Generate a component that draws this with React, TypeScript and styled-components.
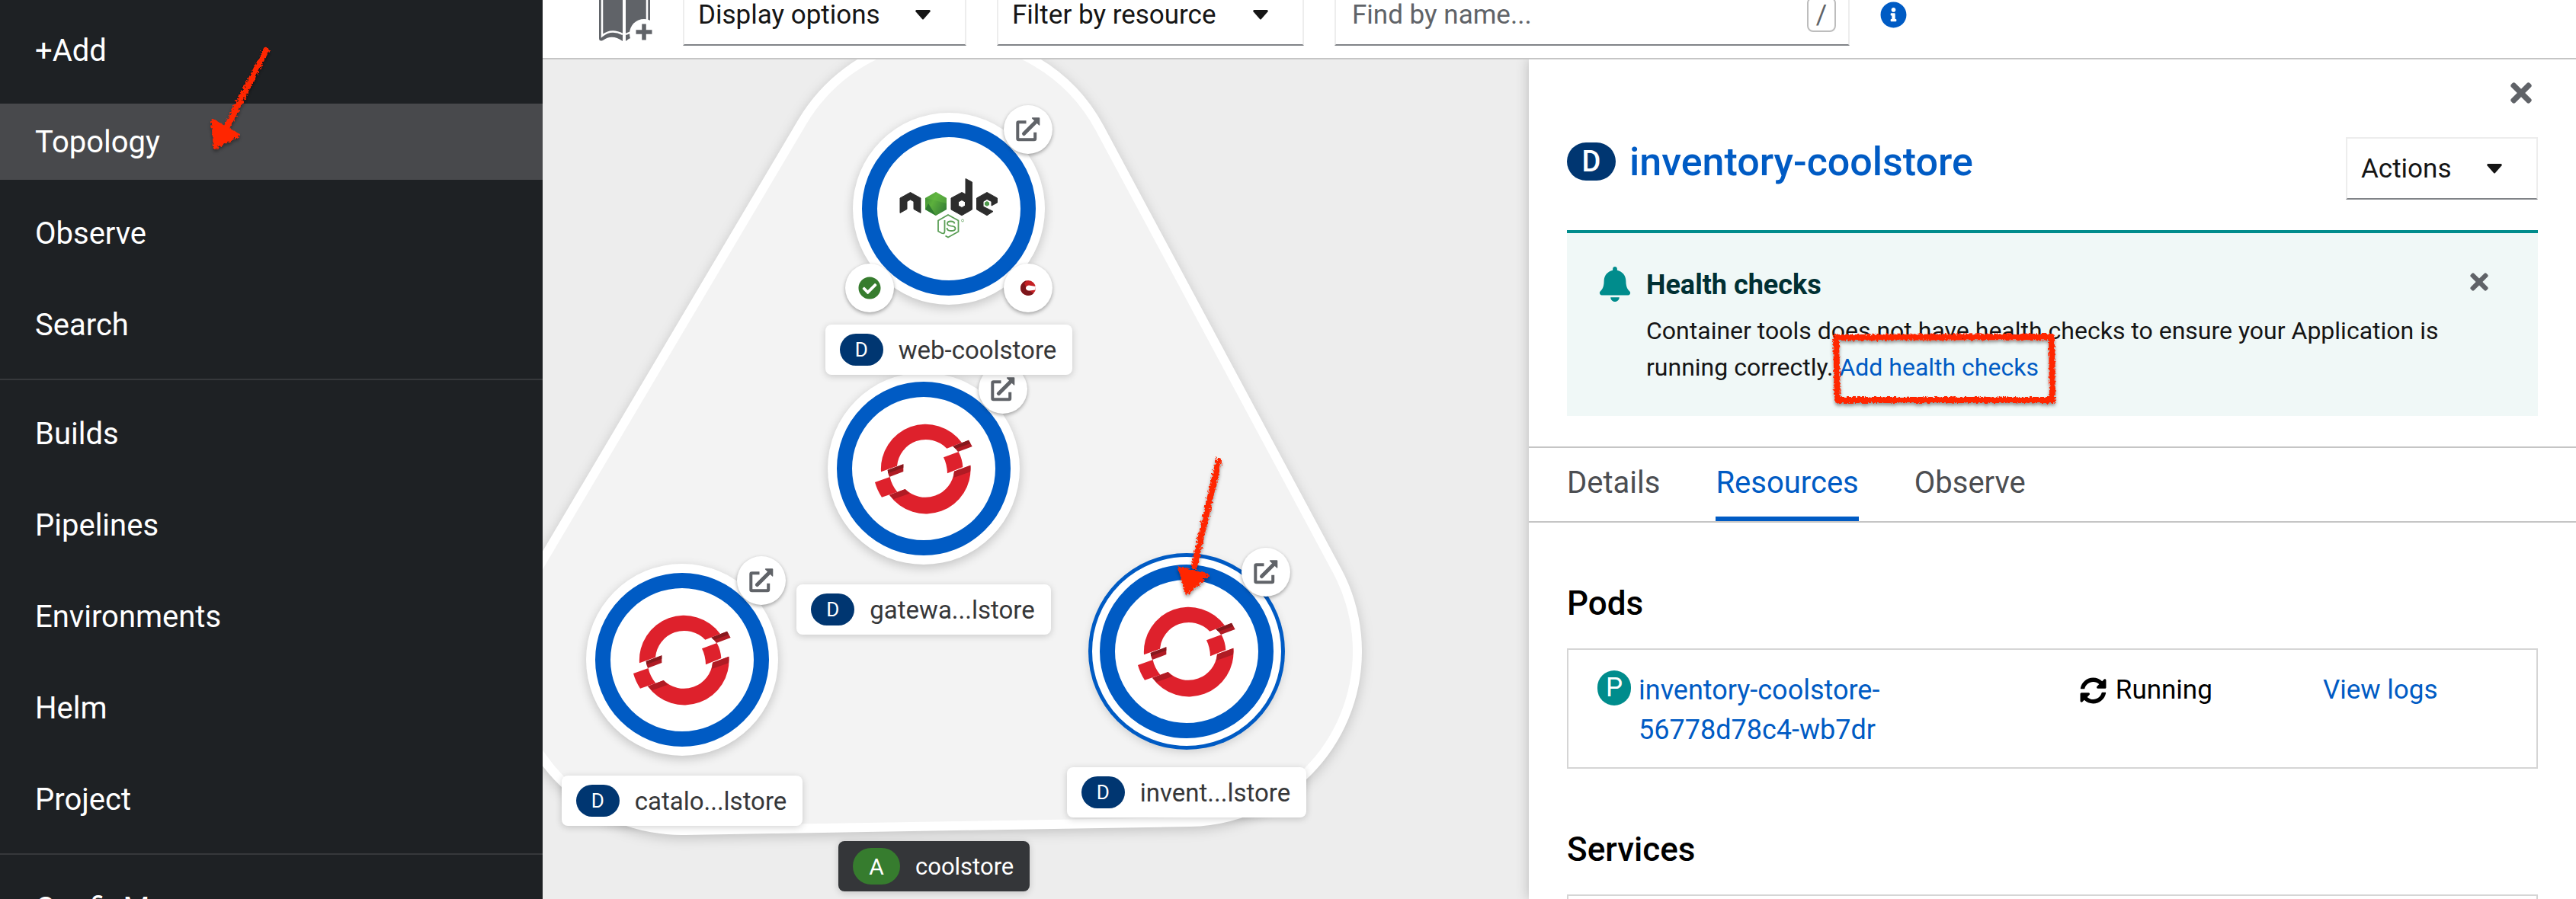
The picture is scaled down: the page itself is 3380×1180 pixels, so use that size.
import React from 'react';
import styled, { createGlobalStyle, css } from 'styled-components';
import { FaBell, FaCheckCircle, FaInfoCircle, FaSyncAlt, FaTimes } from 'react-icons/fa';

const color = {
  nav: '#1e2124',
  navActive: '#48494c',
  navRule: '#36383b',
  text: '#151515',
  muted: '#606368',
  link: '#005bc4',
  navy: '#003671',
  teal: '#008c8c',
  green: '#367c2e',
  rule: '#c5c5c5',
  mark: '#ff2600',
};

const GlobalStyle = createGlobalStyle`
  *, *::before, *::after { box-sizing: border-box; }
  body {
    margin: 0;
    background: #fff;
    color: ${color.text};
    font-family: Roboto, "Liberation Sans", sans-serif;
    font-size: 35px;
  }
  button, input { font: inherit; color: inherit; margin: 0; }
  button { cursor: pointer; }
  a { color: ${color.link}; text-decoration: none; }
  h1, h2, p, ul { margin: 0; padding: 0; }
  ul { list-style: none; }
`;

/* ---------- shell ---------- */

const Shell = styled.div`
  display: flex;
  height: 100vh;
  overflow: hidden;
`;

const Sidebar = styled.nav`
  flex: 0 0 712px;
  background: ${color.nav};
  padding-top: 16px;
  overflow: hidden;
`;

const NavGroup = styled.ul`
  display: flex;
  flex-direction: column;
  gap: 20px;
  padding: 0 0 21px;

  & + & {
    border-top: 2px solid ${color.navRule};
    padding-top: 20px;
  }
`;

const NavItem = styled.li`
  position: relative;
`;

const NavLink = styled.a<{ $active?: boolean }>`
  display: flex;
  align-items: center;
  height: 100px;
  padding: 0 46px;
  font-size: 40px;
  color: #fff;
  background: ${(p) => (p.$active ? color.navActive : 'transparent')};
`;

const Main = styled.main`
  flex: 1;
  min-width: 0;
  display: flex;
  flex-direction: column;
`;

const Workspace = styled.div`
  flex: 1;
  min-height: 0;
  display: flex;
`;

/* ---------- toolbar ---------- */

const Toolbar = styled.div`
  flex: none;
  display: flex;
  align-items: flex-end;
  gap: 40px;
  height: 78px;
  padding: 0 74px 16px;
  border-bottom: 2px solid ${color.rule};
  overflow: hidden;
`;

const field = css`
  flex: none;
  display: flex;
  align-items: center;
  height: 82px;
  border: 2px solid #ededed;
  border-bottom-color: #808387;
  background: #fff;
`;

const Toggle = styled.button<{ $width: number }>`
  ${field}
  width: ${(p) => p.$width}px;
  justify-content: space-between;
  padding: 0 45px 0 18px;
  text-align: left;
  white-space: nowrap;
`;

const SearchField = styled.div`
  ${field}
  width: 676px;
  padding: 0 16px 0 21px;
`;

const SearchInput = styled.input`
  flex: 1;
  min-width: 0;
  padding: 0;
  border: 0;
  outline: 0;
  background: none;

  &::placeholder {
    color: ${color.muted};
    opacity: 1;
  }
`;

const Key = styled.kbd`
  display: flex;
  align-items: center;
  justify-content: center;
  width: 38px;
  height: 46px;
  border: 2px solid #bdbdbd;
  border-radius: 8px;
  font: inherit;
  color: ${color.muted};
`;

const ToolButton = styled.button<{ $color?: string }>`
  flex: none;
  display: flex;
  align-items: center;
  height: 82px;
  padding: 0;
  border: 0;
  background: none;
  color: ${(p) => p.$color ?? color.muted};
`;

/* ---------- topology canvas ---------- */

const Canvas = styled.section`
  position: relative;
  flex: 1;
  min-width: 0;
  overflow: hidden;
  background: #ededed;
`;

const Hull = styled.svg`
  position: absolute;
  left: 0;
  top: 0;
  width: 100%;
  height: 100%;
  overflow: visible;
`;

const NodeBox = styled.div<{ $x: number; $y: number }>`
  position: absolute;
  left: ${(p) => p.$x - 200}px;
  top: ${(p) => p.$y - 126}px;
  width: 400px;
  display: flex;
  flex-direction: column;
  align-items: center;
  gap: 26px;
`;

const Disc = styled.div<{ $selected?: boolean }>`
  position: relative;
  display: flex;
  align-items: center;
  justify-content: center;
  width: 252px;
  height: 252px;
  border-radius: 50%;
  background: #fff;
  box-shadow: ${(p) => (p.$selected ? `0 0 0 3px ${color.link}, ` : '')}0 4px 14px rgba(0, 0, 0, 0.2);
  ${(p) => p.$selected && `border: 2px solid ${color.link};`}
`;

const Ring = styled.div`
  display: flex;
  align-items: center;
  justify-content: center;
  width: 228px;
  height: 228px;
  border: 20px solid ${color.link};
  border-radius: 50%;
`;

type Corner = 'tr' | 'bl' | 'br';

const Decorator = styled.button<{ $corner: Corner; $inset: number }>`
  position: absolute;
  ${(p) => (p.$corner[0] === 't' ? 'top' : 'bottom')}: ${(p) => p.$inset}px;
  ${(p) => (p.$corner[1] === 'l' ? 'left' : 'right')}: ${(p) => p.$inset}px;
  display: flex;
  align-items: center;
  justify-content: center;
  width: 64px;
  height: 64px;
  padding: 0;
  border: 0;
  border-radius: 50%;
  background: #fff;
  color: ${color.muted};
  box-shadow: 0 2px 5px rgba(0, 0, 0, 0.35);
`;

const NodeLabel = styled.div`
  display: flex;
  align-items: center;
  gap: 20px;
  height: 66px;
  padding: 0 21px 0 19px;
  border-radius: 8px;
  background: #fff;
  box-shadow: 0 2px 10px rgba(0, 0, 0, 0.18);
  font-size: 33px;
  color: #363739;
  white-space: nowrap;
`;

const AppLabel = styled(NodeLabel)`
  position: absolute;
  left: 388px;
  top: 1026px;
  background: #343639;
  color: #fff;
  font-size: 31px;
`;

type BadgeSize = 'small' | 'app' | 'title' | 'pod';

const badgeSizes: Record<BadgeSize, string> = {
  small: 'width: 57px; height: 42px; font-size: 26px;',
  app: 'width: 62px; height: 48px; font-size: 30px;',
  title: 'width: 64px; height: 50px; font-size: 38px; font-weight: 500;',
  pod: 'width: 44px; height: 46px; font-size: 35px;',
};

const Badge = styled.span<{ $size: BadgeSize; $bg?: string }>`
  flex: none;
  display: inline-flex;
  align-items: center;
  justify-content: center;
  border-radius: 25px;
  background: ${(p) => p.$bg ?? color.navy};
  color: #fff;
  ${(p) => badgeSizes[p.$size]}
`;

/* ---------- side panel ---------- */

const Panel = styled.aside`
  position: relative;
  flex: 0 0 1374px;
  background: #fff;
  box-shadow: 0 0 16px rgba(0, 0, 0, 0.22);
  clip-path: inset(0 0 0 -40px);
`;

const PanelHeader = styled.header`
  padding: 24px 50px 40px;
`;

const IconButton = styled.button<{ $size: number }>`
  flex: none;
  display: flex;
  align-items: center;
  height: 40px;
  padding: 0;
  border: 0;
  background: none;
  color: ${color.muted};
  font-size: ${(p) => p.$size}px;
`;

const CloseRow = styled.div`
  display: flex;
  justify-content: flex-end;
  padding-right: 2px;
`;

const TitleRow = styled.div`
  display: flex;
  justify-content: space-between;
  align-items: flex-start;
  margin-top: 38px;
`;

const Title = styled.h1`
  display: flex;
  align-items: center;
  gap: 18px;
  height: 64px;
  font-size: 52px;
  font-weight: 500;
`;

const Alert = styled.section`
  display: flex;
  align-items: flex-start;
  margin-top: 40px;
  padding: 44px 60px 40px 40px;
  border-top: 4px solid ${color.teal};
  background: #f0f8f7;
`;

const AlertIcon = styled.span`
  flex: none;
  display: flex;
  margin-right: 18px;
  font-size: 46px;
  color: ${color.teal};
`;

const AlertBody = styled.div`
  flex: 1;
  min-width: 0;
  padding-right: 20px;
  line-height: 48px;
`;

const AlertTitle = styled.h2`
  margin-bottom: 12px;
  font-size: 36px;
  font-weight: 700;
  color: #003033;
`;

const AlertText = styled.p`
  font-size: 32px;
`;

const Marked = styled.span`
  position: relative;
`;

const Tabs = styled.div`
  display: flex;
  gap: 73px;
  padding: 0 50px;
  border-top: 2px solid ${color.rule};
  border-bottom: 2px solid ${color.rule};
`;

const Tab = styled.button<{ $active?: boolean }>`
  height: 96px;
  padding: 0;
  border: 0;
  border-bottom: 6px solid ${(p) => (p.$active ? color.link : 'transparent')};
  background: none;
  font-size: 40px;
  color: ${(p) => (p.$active ? color.link : '#4c4e52')};
`;

const Section = styled.section`
  padding: 80px 50px 0;
`;

const SectionTitle = styled.h2`
  margin-bottom: 33px;
  font-size: 44px;
  font-weight: 500;
  line-height: 52px;
  color: #000;
`;

const ResourceRow = styled.li`
  display: grid;
  grid-template-columns: 53% 1fr 242px;
  align-items: start;
  min-height: 158px;
  padding: 27px 38px 23px;
  border: 2px solid #d5d5d5;
  line-height: 52px;
`;

const PodName = styled.div`
  display: flex;
  align-items: flex-start;
  gap: 10px;

  a {
    max-width: 480px;
    font-size: 36px;
  }
`;

const Status = styled.span`
  display: flex;
  align-items: center;
  gap: 12px;
  color: #000;
`;

/* ---------- hand-drawn markers ---------- */

const Marker = styled.svg<{ $left: number; $top: number }>`
  position: absolute;
  z-index: 2;
  left: ${(p) => p.$left}px;
  top: ${(p) => p.$top}px;
  overflow: visible;
  pointer-events: none;
`;

const Crayon = ({ id }: { id: string }) => (
  <filter id={id} x="-20%" y="-20%" width="140%" height="140%">
    <feTurbulence type="fractalNoise" baseFrequency="0.35" numOctaves="2" seed="4" result="n" />
    <feDisplacementMap in="SourceGraphic" in2="n" scale="6" result="d" />
    <feDropShadow in="d" dx="0" dy="3" stdDeviation="2" floodOpacity="0.4" />
  </filter>
);

type MarkerProps = { left: number; top: number; width: number; height: number; line: string; head?: string };

function CrayonMarker({ left, top, width, height, line, head }: MarkerProps) {
  const id = React.useId();
  return (
    <Marker $left={left} $top={top} width={width} height={height} aria-hidden="true">
      <defs>
        <Crayon id={id} />
      </defs>
      <g filter={`url(#${id})`} stroke={color.mark} strokeLinejoin="round" strokeLinecap="round">
        <path d={line} fill="none" strokeWidth="8" />
        {head && <path d={head} fill={color.mark} strokeWidth="4" />}
      </g>
    </Marker>
  );
}

/* ---------- drawings ---------- */

const Caret = () => (
  <svg width="20" height="13" viewBox="0 0 20 13" aria-hidden="true">
    <path d="M1.5 0h17q1.800.600 1 2.300L11 12q-1 1-2 0L.500 2.300Q-.300.600 1.500 0z" fill={color.text} />
  </svg>
);

const CatalogIcon = () => (
  <svg width="70" height="70" viewBox="0 0 70 70" aria-hidden="true">
    <path d="M0 0h31v70Q17 60 5 69q-5 2-5-3z" fill={color.muted} />
    <path d="M4 0v63Q16 53 31 61" fill="none" stroke="#fff" strokeWidth="2.500" />
    <path d="M35 0h32v64Q48 59 35 70z" fill={color.muted} />
    <path d="M63 0v62Q48 54 35 61" fill="none" stroke="#fff" strokeWidth="2.500" />
    <circle cx="59" cy="60" r="19" fill="#fff" />
    <path d="M59 47.500v21M48.500 58h21" stroke={color.muted} strokeWidth="5.500" />
  </svg>
);

const OpenLinkIcon = () => (
  <svg width="32" height="32" viewBox="0 0 32 32" fill="none" aria-hidden="true">
    <path
      d="M13.500 6.300H3.500Q2.300 6.300 2.300 7.500V28q0 1.200 1.200 1.200H24q1.200 0 1.200-1.200v-8.300"
      stroke="currentColor"
      strokeWidth="4"
    />
    <path d="M10.500 21.500L27 5" stroke="currentColor" strokeWidth="5" strokeLinecap="round" />
    <path d="M21.500.300h8.800q1 0 1 1v9q-.400.800-1 .200L21 1.500q-.500-.900.500-1.200z" fill="currentColor" />
  </svg>
);

const RedRing = () => (
  <svg width="130" height="120" viewBox="440 464 390 360" aria-label="OpenShift" role="img">
    <g fill="#de212c">
      <path d="M467 657A176 176 0 0 1 785 542L726 565A114 114 0 0 0 530 634z" />
      <path d="M713 600L772 578Q787 606 789 638L728 663Q727 628 713 600z" />
      <path d="M443 698L502 677Q508 708 531 736L470 757Q452 730 443 698z" />
      <path d="M819 631A176 176 0 0 1 500 748L562 725A114 114 0 0 0 755 655z" />
    </g>
    <g fill="#b01b24">
      <path d="M750 556L812 532L826 557L770 578Q762 566 750 556z" />
      <path d="M493 650L555 627V656L500 677Q494 664 493 650z" />
      <path d="M755 655L819 631Q820 645 818 657L752 680z" />
      <path d="M500 748L562 725L579 742L516 765z" />
    </g>
    <g fill="#86181d">
      <path d="M750 556L812 532L819 545L760 566z" />
      <path d="M493 650L555 627V640L495 663z" />
    </g>
  </svg>
);

const NodeJsLogo = () => (
  <svg width="132" height="82" viewBox="-66 -41 132 82" aria-label="Node.js" role="img">
    <defs>
      <linearGradient id="hexGreen" x1="0" y1="0" x2="1" y2="0.600">
        <stop offset="0" stopColor="#3c8a35" />
        <stop offset="0.450" stopColor="#5cb03c" />
        <stop offset="1" stopColor="#3a8438" />
      </linearGradient>
    </defs>
    <g fill="#2d2d2d" fillRule="evenodd" stroke="#2d2d2d" strokeLinejoin="round">
      <path d="M-64-14L-50.500-21.500L-37-14V5.500L-46 .500V-9.500L-50.500-12L-55-9.500V.500L-64 5.500z" />
      <path d="M3-14L17-21.500L22-19V-39.500L30.500-35V1L17 8.800L3 1zM17-11.500L12.500-9V-4L17-1.500L21.500-4V-9z" />
      <path d="M36.500-14L50-21.500L63.500-14V-8L56-4V-9.500L50-12.500L45-9.500V-3L58 3.500L50 8.800L36.500 1z" />
    </g>
    <path d="M-31-14L-17-22L-3-14V1L-17 9L-31 1z" fill="url(#hexGreen)" />
    <path d="M-31-14L-17-22L-3-14V-7z" fill="#6abf45" opacity="0.400" />
    <path d="M-31 1L-27-7L-17 9z" fill="#2f7a31" />
    <path d="M50-10L53-8.300V-4.900L50-3.200L47-4.900V-8.300z" fill="#4f9a4c" />
    <g fill="none" stroke="#5a9e55" strokeWidth="1.800" strokeLinejoin="round">
      <path d="M-5.500 15V29.500Q-5.500 33.500-9.500 32L-14 29.500V15.500L-1 8L12.500 15.500V30L-1 37.500L-4.500 35.500" />
      <path d="M7.500 19.500Q7 16.500 2.500 16.500Q-2 16.500-2 19.500Q-2 22 3 22.600Q8.500 23 8.500 26Q8.500 29 3 29Q-2.500 29-2.500 25" />
      <circle cx="18" cy="15.500" r="1.500" strokeWidth="0.700" />
    </g>
  </svg>
);

const WorkspaceIcon = () => (
  <svg width="20" height="20" viewBox="0 0 20 20" aria-hidden="true">
    <circle cx="10" cy="10" r="10" fill="#c41f23" />
    <path d="M8 .200A10 10 0 1 0 17 17.200L12 13.500Q6 14 7 8L5 4z" fill="#7d161b" />
    <path d="M20 8L11 6.500Q7 7 7 10.500Q8 14 12 13.500L19.500 12.500z" fill="#fff" />
  </svg>
);

/* ---------- data and composition ---------- */

const navGroups = [
  ['+Add', 'Topology', 'Observe', 'Search'],
  ['Builds', 'Pipelines', 'Environments', 'Helm', 'Project'],
  ['ConfigMaps'],
];

type WorkloadProps = {
  x: number;
  y: number;
  name: string;
  logo: React.ReactNode;
  selected?: boolean;
  children?: React.ReactNode;
};

function Workload({ x, y, name, logo, selected, children }: WorkloadProps) {
  const inset = selected ? -12 : -10;
  return (
    <NodeBox $x={x} $y={y}>
      <Disc $selected={selected}>
        <Ring>{logo}</Ring>
        <Decorator $corner="tr" $inset={inset} aria-label={`Open ${name}`}>
          <OpenLinkIcon />
        </Decorator>
        {children}
      </Disc>
      <NodeLabel>
        <Badge $size="small">D</Badge>
        {name}
      </NodeLabel>
    </NodeBox>
  );
}

const hullPath = 'M533.500 196L845 777L183 788z';

export default function App() {
  return (
    <>
      <GlobalStyle />
      <Shell>
        <Sidebar aria-label="Developer">
          {navGroups.map((items) => (
            <NavGroup key={items[0]}>
              {items.map((item) => (
                <NavItem key={item}>
                  <NavLink href="#" $active={item === 'Topology'}>
                    {item}
                  </NavLink>
                  {item === 'Topology' && (
                    <CrayonMarker
                      left={270}
                      top={-82}
                      width={90}
                      height={150}
                      line="M79 12L28 112"
                      head="M9 104L43 123L12 140z"
                    />
                  )}
                </NavItem>
              ))}
            </NavGroup>
          ))}
        </Sidebar>

        <Main>
          <Toolbar>
            <ToolButton aria-label="Add from catalog">
              <CatalogIcon />
            </ToolButton>
            <Toggle $width={372}>
              Display options
              <Caret />
            </Toggle>
            <Toggle $width={403}>
              Filter by resource
              <Caret />
            </Toggle>
            <SearchField>
              <SearchInput type="text" aria-label="Find by name" placeholder="Find by name..." />
              <Key>/</Key>
            </SearchField>
            <ToolButton $color={color.link} aria-label="Search help">
              <FaInfoCircle />
            </ToolButton>
          </Toolbar>

          <Workspace>
            <Canvas aria-label="Topology">
              <Hull aria-hidden="true">
                <g strokeLinejoin="round">
                  <path
                    d={hullPath}
                    fill="#fff"
                    stroke="#fff"
                    strokeWidth="460"
                    filter="drop-shadow(0 4px 8px rgba(0,0,0,.18))"
                  />
                  <path d={hullPath} fill="#f3f3f3" stroke="#f3f3f3" strokeWidth="436" />
                </g>
              </Hull>
              <Workload x={500} y={537} name="gatewa...lstore" logo={<RedRing />} />
              <Workload x={183} y={788} name="catalo...lstore" logo={<RedRing />} />
              <Workload x={845} y={777} name="invent...lstore" logo={<RedRing />} selected />
              <Workload x={533} y={196} name="web-coolstore" logo={<NodeJsLogo />}>
                <Decorator $corner="bl" $inset={-10} aria-label="Build complete">
                  <FaCheckCircle size={30} color={color.green} />
                </Decorator>
                <Decorator $corner="br" $inset={-10} aria-label="Edit source">
                  <WorkspaceIcon />
                </Decorator>
              </Workload>
              <AppLabel>
                <Badge $size="app" $bg={color.green}>
                  A
                </Badge>
                coolstore
              </AppLabel>
              <CrayonMarker
                left={825}
                top={515}
                width={70}
                height={190}
                line="M62 12L30 150"
                head="M11 153L47 162L20 186z"
              />
            </Canvas>

            <Panel>
              <PanelHeader>
                <CloseRow>
                  <IconButton $size={40} aria-label="Close panel">
                    <FaTimes />
                  </IconButton>
                </CloseRow>
                <TitleRow>
                  <Title>
                    <Badge $size="title">D</Badge>
                    <a href="#">inventory-coolstore</a>
                  </Title>
                  <Toggle $width={252}>
                    Actions
                    <Caret />
                  </Toggle>
                </TitleRow>
                <Alert>
                  <AlertIcon>
                    <FaBell />
                  </AlertIcon>
                  <AlertBody>
                    <AlertTitle>Health checks</AlertTitle>
                    <AlertText>
                      Container tools does not have health checks to ensure your Application is running correctly.{' '}
                      <Marked>
                        <a href="#">Add health checks</a>
                        <CrayonMarker
                          left={-10}
                          top={-26}
                          width={300}
                          height={96}
                          line="M6 6L289 5L290 88L8 88z"
                        />
                      </Marked>
                    </AlertText>
                  </AlertBody>
                  <IconButton $size={34} aria-label="Dismiss">
                    <FaTimes />
                  </IconButton>
                </Alert>
              </PanelHeader>

              <Tabs role="tablist">
                <Tab role="tab">Details</Tab>
                <Tab role="tab" aria-selected="true" $active>
                  Resources
                </Tab>
                <Tab role="tab">Observe</Tab>
              </Tabs>

              <Section>
                <SectionTitle>Pods</SectionTitle>
                <ul>
                  <ResourceRow>
                    <PodName>
                      <Badge $size="pod" $bg={color.teal}>
                        P
                      </Badge>
                      <a href="#">inventory-coolstore-56778d78c4-wb7dr</a>
                    </PodName>
                    <Status>
                      <FaSyncAlt />
                      Running
                    </Status>
                    <a href="#">View logs</a>
                  </ResourceRow>
                </ul>
              </Section>

              <Section>
                <SectionTitle>Services</SectionTitle>
                <ul>
                  <ResourceRow />
                </ul>
              </Section>
            </Panel>
          </Workspace>
        </Main>
      </Shell>
    </>
  );
}
